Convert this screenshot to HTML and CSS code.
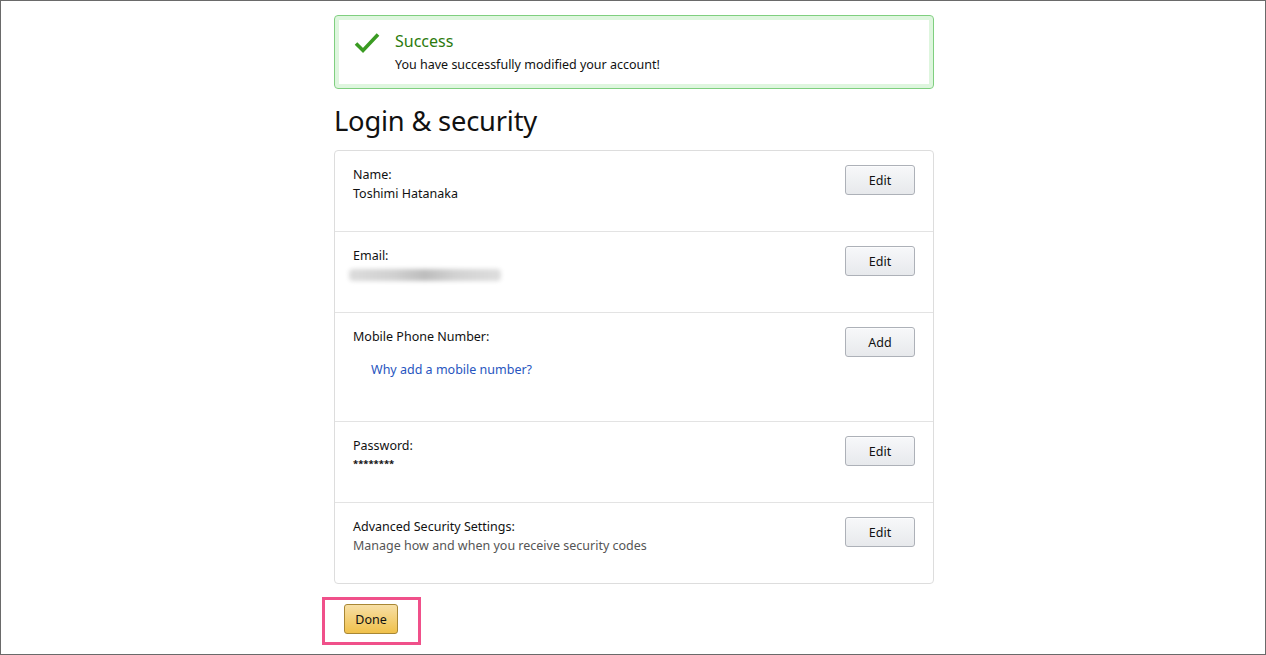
FILE: index.html
```html
<!DOCTYPE html>
<html>
<head>
<meta charset="utf-8">
<link rel="stylesheet" href="styles.css">
</head>
<body>
<div class="frame">
  <div class="page">
    <div class="alert">
      <svg class="check" width="26" height="22" viewBox="0 0 26 22"><path d="M2 11.5 L9 18.5 L24 2.5" fill="none" stroke="#3a9b22" stroke-width="3.6" stroke-linejoin="miter"/></svg>
      <div class="alert-body">
        <div class="alert-title">Success</div>
        <div class="alert-text">You have successfully modified your account!</div>
      </div>
    </div>
    <h1 class="title">Login &amp; security</h1>
    <div class="card">
      <div class="row">
        <div class="info"><div class="label">Name:</div><div class="value">Toshimi Hatanaka</div></div>
        <button class="btn">Edit</button>
      </div>
      <div class="row">
        <div class="info"><div class="label">Email:</div><div class="blur"></div></div>
        <button class="btn">Edit</button>
      </div>
      <div class="row tall">
        <div class="info"><div class="label">Mobile Phone Number:</div><a class="link" href="#">Why add a mobile number?</a></div>
        <button class="btn">Add</button>
      </div>
      <div class="row">
        <div class="info"><div class="label">Password:</div><div class="stars">********</div></div>
        <button class="btn">Edit</button>
      </div>
      <div class="row">
        <div class="info"><div class="label">Advanced Security Settings:</div><div class="muted">Manage how and when you receive security codes</div></div>
        <button class="btn">Edit</button>
      </div>
    </div>
    <div class="done-wrap">
      <div class="highlight"><button class="done">Done</button></div>
    </div>
  </div>
</div>
</body>
</html>
```

FILE: styles.css
```css
* { box-sizing: border-box; }
html, body { margin: 0; padding: 0; }
body {
  font-family: "Noto Sans", "Open Sans", Arial, sans-serif;
  color: #111;
  background: #fff;
}
.frame {
  width: 1266px;
  height: 655px;
  border: 1px solid #6a6a6a;
  overflow: hidden;
}
.page {
  width: 600px;
  margin: 14px auto 0;
  position: relative;
  left: 1px;
}
.alert {
  display: flex;
  align-items: flex-start;
  height: 74px;
  border: 1px solid #7fcf7f;
  border-radius: 4px;
  box-shadow: inset 0 0 0 4px #def6de;
  padding: 14px 18px 0 19px;
}
.check { margin-top: 2px; margin-right: 15px; flex: none; }
.alert-title {
  color: #2b7a0c;
  font-size: 16px;
  line-height: 22px;
}
.alert-text {
  font-size: 12.5px;
  line-height: 18px;
  margin-top: 4px;
}
.title {
  font-size: 27.3px;
  font-weight: 400;
  line-height: 36px;
  margin: 14px 0 0;
  letter-spacing: -0.2px;
}
.card {
  margin-top: 11px;
  border: 1px solid #ddd;
  border-radius: 4px;
}
.row {
  display: flex;
  justify-content: space-between;
  align-items: flex-start;
  height: 81px;
  padding: 14px 18px 0 18px;
  border-bottom: 1px solid #e3e3e3;
}
.row:last-child { border-bottom: none; height: 80px; }
.row.tall { height: 109px; }
.label, .value, .muted {
  font-size: 12.5px;
  line-height: 19px;
}
.muted { color: #555; }
.blur {
  width: 152px;
  height: 12px;
  margin: 4px 0 0 -4px;
  border-radius: 4px;
  background: linear-gradient(90deg, #dcdcdc 0%, #d0d0d0 30%, #bdbdbd 50%, #d2d2d2 70%, #dedede 100%);
  filter: blur(2px);
}
.link {
  display: block;
  margin: 14px 0 0 18px;
  font-size: 12.5px;
  line-height: 19px;
  color: #2755c0;
  text-decoration: none;
}
.stars {
  font-size: 9.5px;
  line-height: 14px;
  font-weight: 700;
  letter-spacing: 0;
  margin-top: 2px;
}
.btn {
  width: 70px;
  height: 30px;
  margin-top: 0;
  border: 1px solid #adb1b8;
  border-radius: 3px;
  background: linear-gradient(#f7f8fa, #e7e9ec);
  box-shadow: inset 0 1px 0 rgba(255,255,255,.6);
  font-family: inherit;
  font-size: 12.5px;
  color: #111;
  padding: 0;
}
.done-wrap {
  margin-top: 13px;
  margin-left: -12px;
}
.highlight {
  display: inline-block;
  border: 3px solid #f0508a;
  padding: 4px 20px 8px 19px;
}
.done {
  width: 54px;
  height: 30px;
  border: 1px solid #a88734;
  border-radius: 3px;
  background: linear-gradient(#f7dfa5, #f0c14b);
  font-family: inherit;
  font-size: 12.5px;
  color: #111;
  padding: 0;
  display: block;
}
```
